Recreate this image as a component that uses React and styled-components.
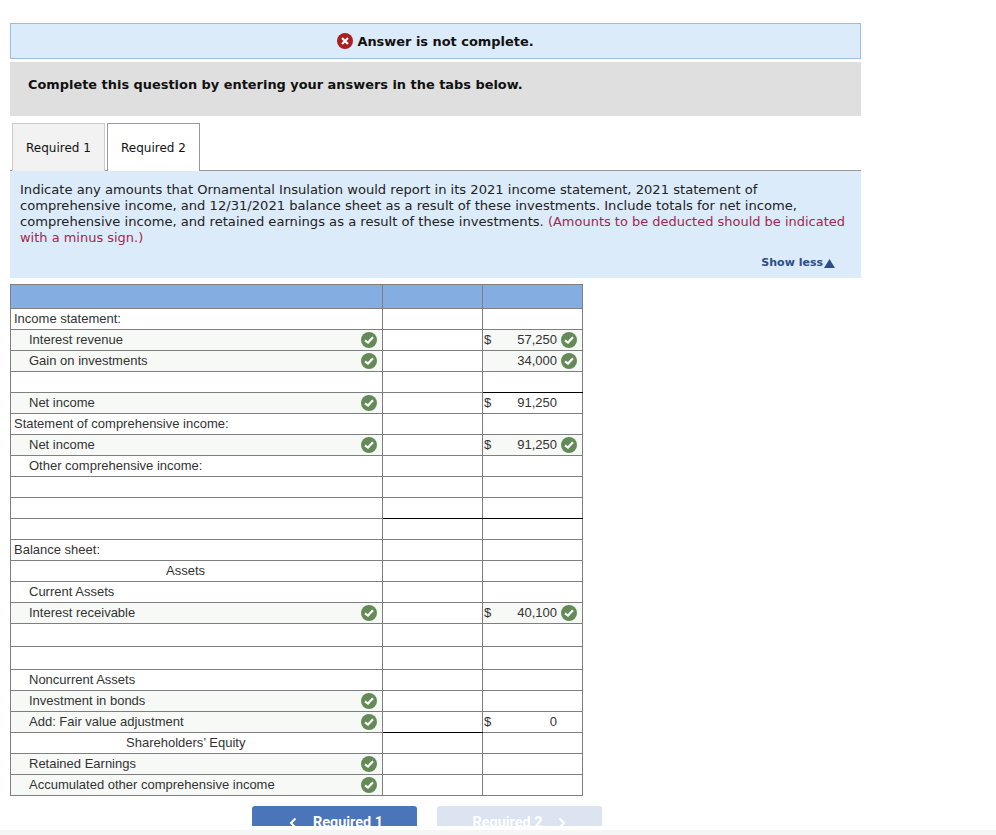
import React from "react";
import styled, { createGlobalStyle } from "styled-components";

const Global = createGlobalStyle`
  html, body { margin: 0; padding: 0; background: #fff; }
  body { height: 835px; overflow: hidden; font-family: "DejaVu Sans", Verdana, sans-serif; color: #111; }
`;
const Page = styled.div`
  width: 851px;
  padding: 23px 0 0 10px;
  height: 808px;
`;
const Banner = styled.div`
  box-sizing: border-box;
  height: 36px;
  background: #dcebf9;
  border: 1px solid #9dbde0;
  display: flex;
  align-items: center;
  justify-content: center;
  gap: 4px;
  font-size: 12.93px;
  font-weight: 700;
`;
const Notice = styled.div`
  box-sizing: border-box;
  height: 54px;
  margin-top: 3px;
  background: #dfdfdf;
  padding: 15px 18px;
  font-size: 12.92px;
  line-height: 16px;
  font-weight: 700;
`;
const Tabs = styled.div`
  display: flex;
  gap: 2px;
  margin-top: 7px;
  padding-left: 2px;
  height: 48px;
  box-sizing: border-box;
  border-bottom: 1px solid #999;
`;
const Tab = styled.div`
  box-sizing: border-box;
  width: 93px;
  height: 48px;
  border: 1px solid ${p => (p.$active ? "#999" : "#ccc")};
  border-bottom: none;
  background: ${p => (p.$active ? "#fff" : "#f2f2f2")};
  display: flex;
  align-items: center;
  justify-content: center;
  font-size: 12px;
  padding-top: 1px;
`;
const Instructions = styled.div`
  box-sizing: border-box;
  height: 107px;
  background: #dcebf9;
  padding: 11px 10px 0;
  font-size: 13.1px;
  line-height: 16px;
  color: #222;
`;
const Hint = styled.span`
  color: #a3264f;
  font-size: 12.97px;
`;
const ShowLess = styled.div`
  display: flex;
  justify-content: flex-end;
  align-items: center;
  gap: 1px;
  margin-top: 9px;
  padding-right: 16px;
  font-size: 11px;
  font-weight: 700;
  color: #2d4e86;
`;
const Table = styled.table`
  border-collapse: collapse;
  table-layout: fixed;
  width: 572px;
  margin-top: 6px;
  font-family: "Liberation Sans", Arial, sans-serif;
  font-size: 13px;
  color: #333;
`;
const HeadCell = styled.th`
  background: #84aee2;
  border: 1px solid #7f7f7f;
  height: 23px;
  padding: 0;
`;
const Row = styled.tr`
  height: ${p => p.$h || 21}px;
`;
const Cell = styled.td`
  box-sizing: border-box;
  border: 1px solid #7f7f7f;
  border-bottom-color: ${p => (p.$heavy ? "#000" : "#7f7f7f")};
  border-top-color: ${p => (p.$heavyTop ? "#000" : "#7f7f7f")};
  background: ${p => (p.$tint ? "#f6f9f5" : "#fff")};
  padding: 0;
  height: inherit;
  overflow: hidden;
  white-space: nowrap;
  line-height: 20px;
`;
const LabelWrap = styled.div`
  display: flex;
  align-items: center;
  justify-content: space-between;
  height: 20px;
  padding: 0 5px 0 ${p => 3 + (p.$indent || 0)}px;
`;
const LabelText = styled.span`
  ${p => p.$at && `margin-left: ${p.$at}px;`}
`;
const Amount = styled.div`
  display: flex;
  align-items: center;
  height: 20px;
  padding: 0 5px 0 1px;
`;
const Dollar = styled.span`
  width: 16px;
`;
const Value = styled.span`
  flex: 1;
  text-align: right;
  padding-right: 4px;
`;
const IconSlot = styled.span`
  display: inline-flex;
  width: 16px;
  height: 16px;
`;
const Footer = styled.div`
  display: flex;
  gap: 20px;
  margin-top: 10px;
  padding-left: 242px;
  height: 20px;
  overflow: hidden;
`;
const NavButton = styled.div`
  box-sizing: border-box;
  width: 165px;
  height: 30px;
  border-radius: 3px 3px 0 0;
  background: ${p => (p.$disabled ? "#dce4f2" : "#4a75b8")};
  color: #fff;
  font-family: Roboto, "Liberation Sans", sans-serif;
  font-weight: 700;
  font-size: 14.4px;
  display: flex;
  justify-content: center;
  gap: 16px;
  padding-top: 9px;
  line-height: 16px;
  ${p => !p.$disabled && "padding-left: 3px;"}
`;
const Strip = styled.div`
  position: fixed;
  left: 0;
  right: 0;
  top: 830px;
  height: 5px;
  background: #f5f5f5;
`;

const Check = () => (
  <svg width="16" height="16" viewBox="0 0 16 16">
    <circle cx="8" cy="8" r="8" fill="#648b57" />
    <path d="M4 8.3 7 10.6 12 5.2" fill="none" stroke="#fff" strokeWidth="2.2" />
  </svg>
);
const Cross = () => (
  <svg width="16" height="16" viewBox="0 0 16 16">
    <circle cx="8" cy="8" r="8" fill="#a81f1f" />
    <path d="M5 5 11 11M11 5 5 11" fill="none" stroke="#fff" strokeWidth="2.2" />
  </svg>
);
const Chevron = ({ dir }) => (
  <svg width="8" height="16" viewBox="0 0 8 16">
    <path d={dir === "left" ? "M6.5 3.5 2 8 6.5 12.5" : "M1.5 3.5 6 8 1.5 12.5"} fill="none" stroke="#fff" strokeWidth="2" />
  </svg>
);

const rows = [
  { label: "Income statement:" },
  { label: "Interest revenue", indent: 15, check: true, tint: true, dollar: true, value: "57,250", valueCheck: true },
  { label: "Gain on investments", indent: 15, check: true, tint: true, value: "34,000", valueCheck: true },
  { heavyC: true },
  { label: "Net income", indent: 15, check: true, tint: true, dollar: true, value: "91,250" },
  { label: "Statement of comprehensive income:" },
  { label: "Net income", indent: 15, check: true, tint: true, dollar: true, value: "91,250", valueCheck: true },
  { label: "Other comprehensive income:", indent: 15 },
  {},
  { heavyB: true, heavyC: true },
  {},
  { label: "Balance sheet:" },
  { label: "Assets", at: 152 },
  { label: "Current Assets", indent: 15 },
  { label: "Interest receivable", indent: 15, check: true, tint: true, dollar: true, value: "40,100", valueCheck: true },
  { h: 23 },
  { h: 23 },
  { label: "Noncurrent Assets", indent: 15 },
  { label: "Investment in bonds", indent: 15, check: true, tint: true },
  { label: "Add: Fair value adjustment", indent: 15, check: true, tint: true, dollar: true, value: "0", heavyB: true },
  { label: "Shareholders’ Equity", at: 112 },
  { label: "Retained Earnings", indent: 15, check: true, tint: true },
  { label: "Accumulated other comprehensive income", indent: 15, check: true, tint: true },
];

export default function App() {
  return (
    <>
      <Global />
      <Page>
        <Banner>
          <Cross />
          <span>Answer is not complete.</span>
        </Banner>
        <Notice>Complete this question by entering your answers in the tabs below.</Notice>
        <Tabs>
          <Tab>Required 1</Tab>
          <Tab $active>Required 2</Tab>
        </Tabs>
        <Instructions>
          Indicate any amounts that Ornamental Insulation would report in its 2021 income statement, 2021 statement of
          comprehensive income, and 12/31/2021 balance sheet as a result of these investments. Include totals for net
          income, comprehensive income, and retained earnings as a result of these investments.{" "}
          <Hint>(Amounts to be deducted should be indicated with a minus sign.)</Hint>
          <ShowLess>
            Show less
            <svg width="11" height="9" viewBox="0 0 11 9">
              <path d="M5.5 0 11 9H0Z" fill="#2d4e86" />
            </svg>
          </ShowLess>
        </Instructions>
        <Table>
          <colgroup>
            <col width="372" />
            <col width="100" />
            <col width="100" />
          </colgroup>
          <thead>
            <tr>
              <HeadCell />
              <HeadCell />
              <HeadCell />
            </tr>
          </thead>
          <tbody>
            {rows.map((r, i) => {
              const prev = rows[i - 1] || {};
              return (
                <Row key={i} $h={r.h}>
                  <Cell $tint={r.tint}>
                    <LabelWrap $indent={r.indent}>
                      <LabelText $at={r.at}>{r.label}</LabelText>
                      {r.check && (
                        <IconSlot>
                          <Check />
                        </IconSlot>
                      )}
                    </LabelWrap>
                  </Cell>
                  <Cell $heavy={r.heavyB} />
                  <Cell $tint={r.value && r.valueCheck} $heavy={r.heavyC} $heavyTop={prev.heavyC}>
                    {r.value && (
                      <Amount>
                        <Dollar>{r.dollar ? "$" : ""}</Dollar>
                        <Value>{r.value}</Value>
                        <IconSlot>{r.valueCheck && <Check />}</IconSlot>
                      </Amount>
                    )}
                  </Cell>
                </Row>
              );
            })}
          </tbody>
        </Table>
        <Footer>
          <NavButton>
            <Chevron dir="left" />
            <span>Required 1</span>
          </NavButton>
          <NavButton $disabled>
            <span>Required 2</span>
            <Chevron dir="right" />
          </NavButton>
        </Footer>
      </Page>
      <Strip />
    </>
  );
}
